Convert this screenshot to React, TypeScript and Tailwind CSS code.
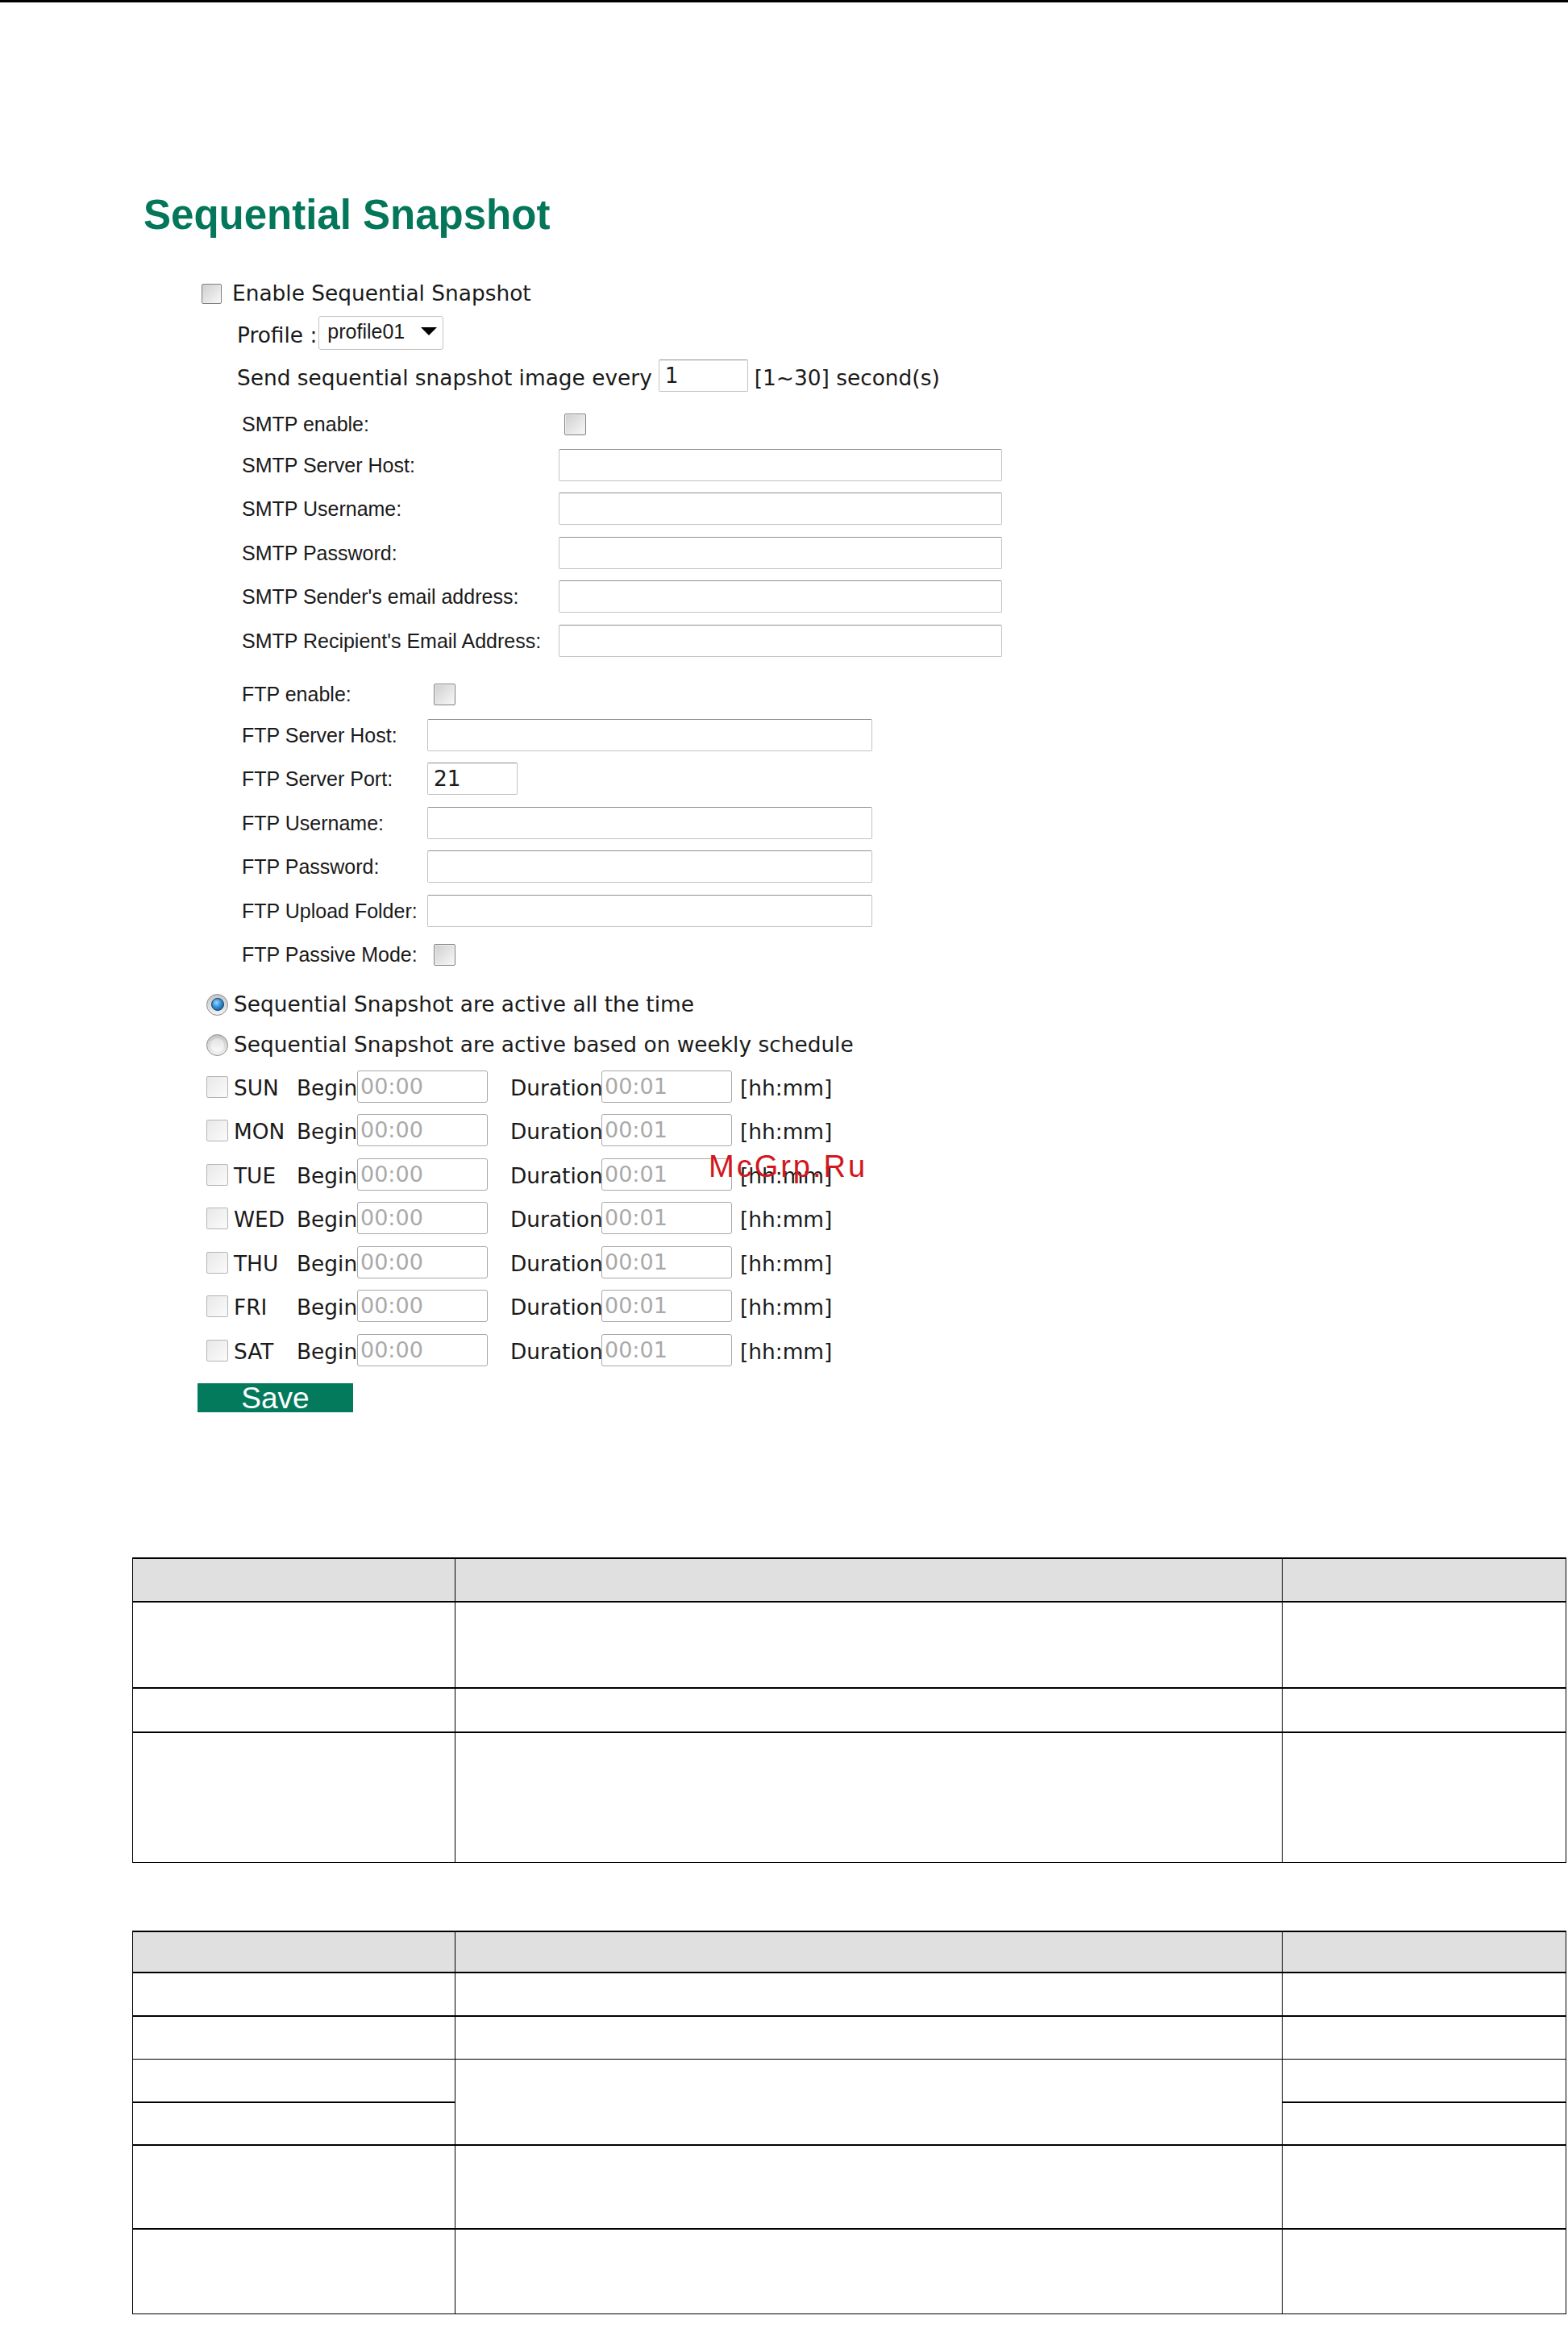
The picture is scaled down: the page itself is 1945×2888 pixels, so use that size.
import React from "react";

const tah = "font-['DejaVu_Sans',sans-serif] text-[26.4px] leading-[30px] text-[#1a1a1a] whitespace-nowrap";
const ari = "font-['Liberation_Sans',Arial,sans-serif] text-[25px] leading-[29px] text-[#1a1a1a] whitespace-nowrap";

function Check({ light = false }: { light?: boolean }) {
  return light ? (
    <span className="block w-[27px] h-[27px] shrink-0 border border-[#b5b5b5] rounded-[2px] bg-gradient-to-br from-[#e8e8e8] to-[#fbfbfb]" />
  ) : (
    <span className="block w-[27px] h-[27px] shrink-0 border border-[#808080] rounded-[2px] bg-gradient-to-br from-[#cfcfcf] to-[#f8f8f8] shadow-[inset_0_0_0_1px_#f0f0f0]" />
  );
}

function Radio({ checked = false }: { checked?: boolean }) {
  return (
    <span className="flex items-center justify-center w-[27px] h-[27px] shrink-0 rounded-full border border-[#8a8a8a] bg-gradient-to-b from-[#c4c4c4] to-[#f2f2f2]">
      {checked ? (
        <span className="block w-[16px] h-[16px] rounded-full border border-[#0f3d66] bg-[radial-gradient(circle_at_40%_35%,#9fd6ff_0%,#2f8fd6_45%,#0c4f8c_100%)]" />
      ) : (
        <span className="block w-[17px] h-[17px] rounded-full bg-gradient-to-b from-[#e2e2e2] to-[#fafafa]" />
      )}
    </span>
  );
}

function TextInput({ w, value = "" }: { w: string; value?: string }) {
  return (
    <span
      className={`flex items-center h-[40px] ${w} shrink-0 border border-[#c2c2c2] border-t-[#8f8f8f] rounded-[2px] bg-white pl-[7px] font-['DejaVu_Sans',sans-serif] text-[26.4px] text-[#1a1a1a]`}
    >
      {value}
    </span>
  );
}

function TimeInput({ value }: { value: string }) {
  return (
    <span className="flex items-center h-[40px] w-[162px] shrink-0 border border-[#a8a8a8] rounded-[3px] bg-white pl-[3px] font-['DejaVu_Sans',sans-serif] text-[27px] text-[#a9a9a9]">
      {value}
    </span>
  );
}

const smtp = [
  { label: "SMTP Server Host:", mt: "mt-[11px]" },
  { label: "SMTP Username:", mt: "mt-[14px]" },
  { label: "SMTP Password:", mt: "mt-[15px]" },
  { label: "SMTP Sender's email address:", mt: "mt-[14px]" },
  { label: "SMTP Recipient's Email Address:", mt: "mt-[15px]" },
];

const days = [
  { d: "SUN", mt: "mt-[12px]" },
  { d: "MON", mt: "mt-[14px]" },
  { d: "TUE", mt: "mt-[15px]" },
  { d: "WED", mt: "mt-[14px]" },
  { d: "THU", mt: "mt-[15px]" },
  { d: "FRI", mt: "mt-[14px]" },
  { d: "SAT", mt: "mt-[15px]" },
];

function Cell({ cls }: { cls: string }) {
  return <div className={`border-l border-black ${cls}`} />;
}

export default function App() {
  return (
    <div className="relative w-[1945px] h-[2888px] bg-white overflow-hidden">
      <div className="h-[3px] bg-black" />

      {/* Title */}
      <div className="mt-[238px] pl-[178px]">
        <h1 className="font-['Liberation_Sans',Arial,sans-serif] font-bold text-[51px] leading-[51px] text-[#04775a] whitespace-nowrap">
          Sequential Snapshot
        </h1>
      </div>

      {/* Form */}
      <div className="flex flex-col pl-[245px]">
        {/* Enable */}
        <div className="mt-[52px] h-[40px] flex items-center ml-[5px]">
          <span className="block w-[25px] h-[25px] shrink-0 border border-[#808080] rounded-[2px] bg-gradient-to-br from-[#cfcfcf] to-[#f8f8f8]" />
          <span className={`${tah} ml-[13px]`}>Enable Sequential Snapshot</span>
        </div>

        {/* Profile */}
        <div className="mt-[8px] h-[42px] flex items-center ml-[49px]">
          <span className={`${tah} pt-[6px]`}>Profile :</span>
          <span className="ml-[2px] flex items-center justify-between w-[155px] h-[42px] border border-[#c4c4c4] rounded-[3px] bg-white pl-[10px] pr-[7px]">
            <span className="font-['Liberation_Sans',Arial,sans-serif] text-[25px] leading-[29px] text-[#1a1a1a] pb-[4px]">profile01</span>
            <svg width="20" height="10" viewBox="0 0 20 10" className="mb-[4px]">
              <polygon points="0,0 20,0 10,10" fill="#000" />
            </svg>
          </span>
        </div>

        {/* Send */}
        <div className="mt-[12px] h-[40px] flex items-center ml-[49px]">
          <span className={`${tah} pt-[6px]`}>Send sequential snapshot image every</span>
          <span className="ml-[8px]">
            <TextInput w="w-[111px]" value="1" />
          </span>
          <span className={`${tah} ml-[8px] pt-[6px]`}>[1~30] second(s)</span>
        </div>

        {/* SMTP */}
        <div className="mt-[20px] h-[40px] flex items-center ml-[55px]">
          <span className={`${ari} w-[400px]`}>SMTP enable:</span>
          <Check />
        </div>
        {smtp.map((r) => (
          <div key={r.label} className={`${r.mt} h-[40px] flex items-center ml-[55px]`}>
            <span className={`${ari} w-[393px]`}>{r.label}</span>
            <TextInput w="w-[550px]" />
          </div>
        ))}

        {/* FTP */}
        <div className="mt-[26px] h-[40px] flex items-center ml-[55px]">
          <span className={`${ari} w-[238px]`}>FTP enable:</span>
          <Check />
        </div>
        <div className="mt-[11px] h-[40px] flex items-center ml-[55px]">
          <span className={`${ari} w-[230px]`}>FTP Server Host:</span>
          <TextInput w="w-[552px]" />
        </div>
        <div className="mt-[14px] h-[40px] flex items-center ml-[55px]">
          <span className={`${ari} w-[230px]`}>FTP Server Port:</span>
          <TextInput w="w-[112px]" value="21" />
        </div>
        <div className="mt-[15px] h-[40px] flex items-center ml-[55px]">
          <span className={`${ari} w-[230px]`}>FTP Username:</span>
          <TextInput w="w-[552px]" />
        </div>
        <div className="mt-[14px] h-[40px] flex items-center ml-[55px]">
          <span className={`${ari} w-[230px]`}>FTP Password:</span>
          <TextInput w="w-[552px]" />
        </div>
        <div className="mt-[15px] h-[40px] flex items-center ml-[55px]">
          <span className={`${ari} w-[230px]`}>FTP Upload Folder:</span>
          <TextInput w="w-[552px]" />
        </div>
        <div className="mt-[14px] h-[40px] flex items-center ml-[55px]">
          <span className={`${ari} w-[238px]`}>FTP Passive Mode:</span>
          <Check />
        </div>

        {/* Radios */}
        <div className="mt-[22px] h-[40px] flex items-center ml-[11px]">
          <Radio checked />
          <span className={`${tah} ml-[7px]`}>Sequential Snapshot are active all the time</span>
        </div>
        <div className="mt-[10px] h-[40px] flex items-center ml-[11px]">
          <Radio />
          <span className={`${tah} ml-[7px]`}>Sequential Snapshot are active based on weekly schedule</span>
        </div>

        {/* Days */}
        {days.map((r) => (
          <div key={r.d} className={`${r.mt} h-[40px] flex items-center ml-[11px]`}>
            <Check light />
            <span className={`${tah} ml-[7px] w-[78px] pt-[4px]`}>{r.d}</span>
            <span className={`${tah} w-[75px] pt-[4px]`}>Begin</span>
            <TimeInput value="00:00" />
            <span className={`${tah} ml-[28px] w-[113px] pt-[4px]`}>Duration</span>
            <TimeInput value="00:01" />
            <span className={`${tah} ml-[10px] pt-[4px]`}>[hh:mm]</span>
          </div>
        ))}

        {/* Save */}
        <div className="mt-[21px]">
          <button className="flex items-center justify-center w-[193px] h-[36px] bg-[#047a5c]">
            <span className="font-['Liberation_Sans',Arial,sans-serif] text-[37px] leading-[34px] text-white pt-[2px]">Save</span>
          </button>
        </div>
      </div>

      {/* Tables */}
      <div className="pl-[164px]">
        <div className="mt-[180px] w-[1779px] border-t-2 border-r border-black grid grid-cols-[400px_1026px_352px] grid-rows-[54px_107px_55px_161px]">
          <Cell cls="bg-[#e0e0e0] border-b-2" />
          <Cell cls="bg-[#e0e0e0] border-b-2" />
          <Cell cls="bg-[#e0e0e0] border-b-2" />
          <Cell cls="border-b-2" />
          <Cell cls="border-b-2" />
          <Cell cls="border-b-2" />
          <Cell cls="border-b-2" />
          <Cell cls="border-b-2" />
          <Cell cls="border-b-2" />
          <Cell cls="border-b" />
          <Cell cls="border-b" />
          <Cell cls="border-b" />
        </div>

        <div className="mt-[84px] w-[1779px] border-t-2 border-r border-black grid grid-cols-[400px_1026px_352px] grid-rows-[51px_54px_53px_54px_53px_104px_105px]">
          <Cell cls="bg-[#e0e0e0] border-b-2" />
          <Cell cls="bg-[#e0e0e0] border-b-2" />
          <Cell cls="bg-[#e0e0e0] border-b-2" />
          <Cell cls="border-b-2" />
          <Cell cls="border-b-2" />
          <Cell cls="border-b-2" />
          <Cell cls="border-b" />
          <Cell cls="border-b" />
          <Cell cls="border-b" />
          <Cell cls="border-b-2" />
          <Cell cls="border-b-2 row-span-2" />
          <Cell cls="border-b-2" />
          <Cell cls="border-b-2 col-start-1" />
          <Cell cls="border-b-2 col-start-3" />
          <Cell cls="border-b-2" />
          <Cell cls="border-b-2" />
          <Cell cls="border-b-2" />
          <Cell cls="border-b" />
          <Cell cls="border-b" />
          <Cell cls="border-b" />
        </div>
      </div>

      {/* Watermark */}
      <div className="absolute left-[879px] top-[1425px] font-['Liberation_Sans',Arial,sans-serif] text-[38px] leading-[44px] tracking-[3px] text-[#d3171c] whitespace-nowrap">
        McGrp.Ru
      </div>
    </div>
  );
}
